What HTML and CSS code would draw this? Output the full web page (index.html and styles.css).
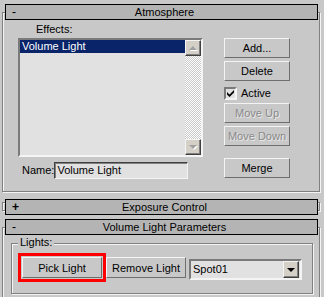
FILE: index.html
```html
<!DOCTYPE html>
<html lang="en">

<head>
    <meta charset="UTF-8">
    <title>Environment and Effects</title>
    <link rel="stylesheet" href="styles.css">
</head>

<body>
    <div class="panel">
        <div class="rollout rollout-atmos">
            <div class="rollout-title">
                <span class="sign">-</span>
                <span class="title-text">Atmosphere</span>
            </div>

            <div class="atmos">
                <div class="atmos-left">
                    <div class="field-label">Effects:</div>
                    <div class="listbox">
                        <div class="list-items">
                            <div class="list-item selected">Volume Light</div>
                        </div>
                        <div class="scrollbar">
                            <div class="sb-btn"><span class="arrow-up"></span></div>
                            <div class="sb-track"></div>
                            <div class="sb-btn"><span class="arrow-down"></span></div>
                        </div>
                    </div>
                    <div class="name-row">
                        <span class="name-label">Name:</span>
                        <div class="textbox">Volume Light</div>
                    </div>
                </div>

                <div class="atmos-right">
                    <button class="btn">Add...</button>
                    <button class="btn">Delete</button>
                    <div class="check-row">
                        <span class="check-box">
                            <svg width="9" height="9" viewBox="0 0 9 9">
                                <path d="M1 3 L3.5 5.5 L8 1 L8 3.5 L3.5 8 L1 5.5 Z" fill="#000"/>
                            </svg>
                        </span>
                        <span>Active</span>
                    </div>
                    <button class="btn" disabled>Move Up</button>
                    <button class="btn" disabled>Move Down</button>
                    <button class="btn btn-merge">Merge</button>
                </div>
            </div>
        </div>

        <div class="rollout rollout-closed">
            <div class="rollout-title">
                <span class="sign sign-plus">+</span>
                <span class="title-text">Exposure Control</span>
            </div>
        </div>

        <div class="rollout rollout-volume">
            <div class="rollout-title">
                <span class="sign">-</span>
                <span class="title-text">Volume Light Parameters</span>
            </div>

            <div class="group">
                <div class="group-label">Lights:</div>
                <div class="lights-row">
                    <button class="btn btn-light btn-marked">Pick Light</button>
                    <button class="btn btn-light">Remove Light</button>
                    <div class="dropdown">
                        <span class="dropdown-value">Spot01</span>
                        <span class="dropdown-btn"><span class="arrow-down dark"></span></span>
                    </div>
                </div>
            </div>
        </div>
    </div>
</body>

</html>
```

FILE: styles.css
```css
:root {
    --face: #c8c8c8;
    --title-bg: #b4b4b4;
    --field-bg: #e1e1e1;
    --shadow: #808080;
    --dark: #404040;
    --light: #f4f4f4;
    --select: #0a246a;
    --btn-face: #d4d0c8;
}

* {
    margin: 0;
    padding: 0;
    box-sizing: border-box;
}

body {
    width: 324px;
    height: 297px;
    overflow: hidden;
    background-color: var(--face);
    color: #000;
    font-family: 'Liberation Sans', Arial, sans-serif;
    font-size: 11px;
    line-height: 13px;
}

.panel {
    padding: 0 4px 0 2px;
}

/* Rollouts: etched frame with the title bar sitting over its top edge */
.rollout {
    border: 1px solid var(--shadow);
    box-shadow: inset 1px 1px 0 var(--light), 1px 1px 0 var(--light);
}

.rollout-atmos {
    margin-top: 12px;
}

.rollout-closed {
    margin-top: 10px;
}

.rollout-volume {
    margin-top: 16px;
    padding-bottom: 4px;
}

.rollout-title {
    display: grid;
    grid-template-columns: 1fr auto 1fr;
    align-items: center;
    height: 16px;
    margin: -9px 1px 0 2px;
    padding-left: 6px;
    border: 1px solid #000;
    background-color: var(--title-bg);
    line-height: 14px;
}

.rollout-closed .rollout-title {
    margin-top: -4px;
    margin-bottom: -5px;
}

.sign {
    font-size: 12px;
}

.sign-plus {
    font-weight: bold;
}

/* Atmosphere */
.atmos {
    display: flex;
    gap: 21px;
    padding: 0 0 12px 15px;
}

.atmos-left {
    width: 185px;
}

.field-label {
    height: 18px;
    padding: 3px 0 0 18px;
}

.listbox {
    display: flex;
    height: 119px;
    border: 2px solid;
    border-color: #7a7a7a #f4f4f4 #f4f4f4 #7a7a7a;
    background-color: var(--field-bg);
}

.list-items {
    flex: 1;
}

.list-item {
    height: 13px;
    padding-left: 2px;
    line-height: 13px;
}

.list-item.selected {
    background-color: var(--select);
    color: #fff;
}

.scrollbar {
    display: flex;
    flex-direction: column;
    width: 16px;
}

.sb-track {
    flex: 1;
    background: repeating-conic-gradient(#fff 0 25%, #c8c8c8 0 50%) 0 0 / 2px 2px;
}

.sb-btn,
.dropdown-btn {
    display: flex;
    align-items: center;
    justify-content: center;
    width: 16px;
    height: 16px;
    border: 1px solid;
    border-color: var(--light) var(--dark) var(--dark) var(--light);
    background-color: var(--btn-face);
    box-shadow: inset -1px -1px 0 var(--shadow);
}

.arrow-up,
.arrow-down {
    width: 0;
    height: 0;
    border-left: 4px solid transparent;
    border-right: 4px solid transparent;
}

.arrow-up {
    border-bottom: 4px solid #a0a0a0;
    filter: drop-shadow(1px 1px 0 #fff);
}

.arrow-down {
    border-top: 4px solid #a0a0a0;
    filter: drop-shadow(1px 1px 0 #fff);
}

.arrow-down.dark {
    border-top-color: #000;
    filter: none;
}

.name-row {
    display: flex;
    align-items: center;
    width: 170px;
    margin-top: 5px;
    padding-left: 4px;
}

.textbox {
    width: 134px;
    height: 17px;
    margin-left: auto;
    padding-left: 2px;
    border: 1px solid;
    border-color: var(--dark) var(--light) var(--light) var(--dark);
    box-shadow: inset 1px 1px 0 var(--shadow);
    background-color: var(--field-bg);
    line-height: 15px;
}

.atmos-right {
    display: flex;
    flex-direction: column;
    width: 66px;
    margin-top: 18px;
}

.btn {
    height: 20px;
    margin-bottom: 3px;
    border: 1px solid;
    border-color: var(--light) #6e6e6e #6e6e6e var(--light);
    background-color: var(--face);
    font-family: inherit;
    font-size: 11px;
    color: #000;
}

.btn:disabled {
    color: #8a8a8a;
    text-shadow: 1px 1px 0 #eaeaea;
}

.btn-merge {
    margin: 9px 0 0;
}

.check-row {
    display: flex;
    align-items: center;
    gap: 4px;
    height: 19px;
}

.check-box {
    display: flex;
    align-items: center;
    justify-content: center;
    width: 13px;
    height: 13px;
    border: 2px solid;
    border-color: #7a7a7a #f4f4f4 #f4f4f4 #7a7a7a;
    background-color: var(--field-bg);
}

/* Volume light parameters */
.group {
    margin: 8px 6px 0 8px;
    padding-bottom: 13px;
    border: 1px solid var(--shadow);
    box-shadow: inset 1px 1px 0 var(--light), 1px 1px 0 var(--light);
}

.group-label {
    width: max-content;
    margin: -8px 0 0 6px;
    padding: 0 2px;
    background-color: var(--face);
}

.lights-row {
    display: flex;
    align-items: flex-start;
    margin-top: 8px;
    padding-left: 10px;
}

.btn-light {
    width: 80px;
    height: 21px;
    margin: 0 4px 0 0;
}

.btn-marked {
    outline: 3px solid #ff0000;
    outline-offset: 1px;
}

.dropdown {
    display: flex;
    align-items: center;
    width: 113px;
    height: 21px;
    margin: 2px 0 0 -1px;
    padding-right: 1px;
    border: 2px solid;
    border-color: #7a7a7a #f4f4f4 #f4f4f4 #7a7a7a;
    background-color: var(--field-bg);
}

.dropdown-value {
    flex: 1;
    padding-left: 2px;
}

.dropdown-btn {
    height: 17px;
}
```
